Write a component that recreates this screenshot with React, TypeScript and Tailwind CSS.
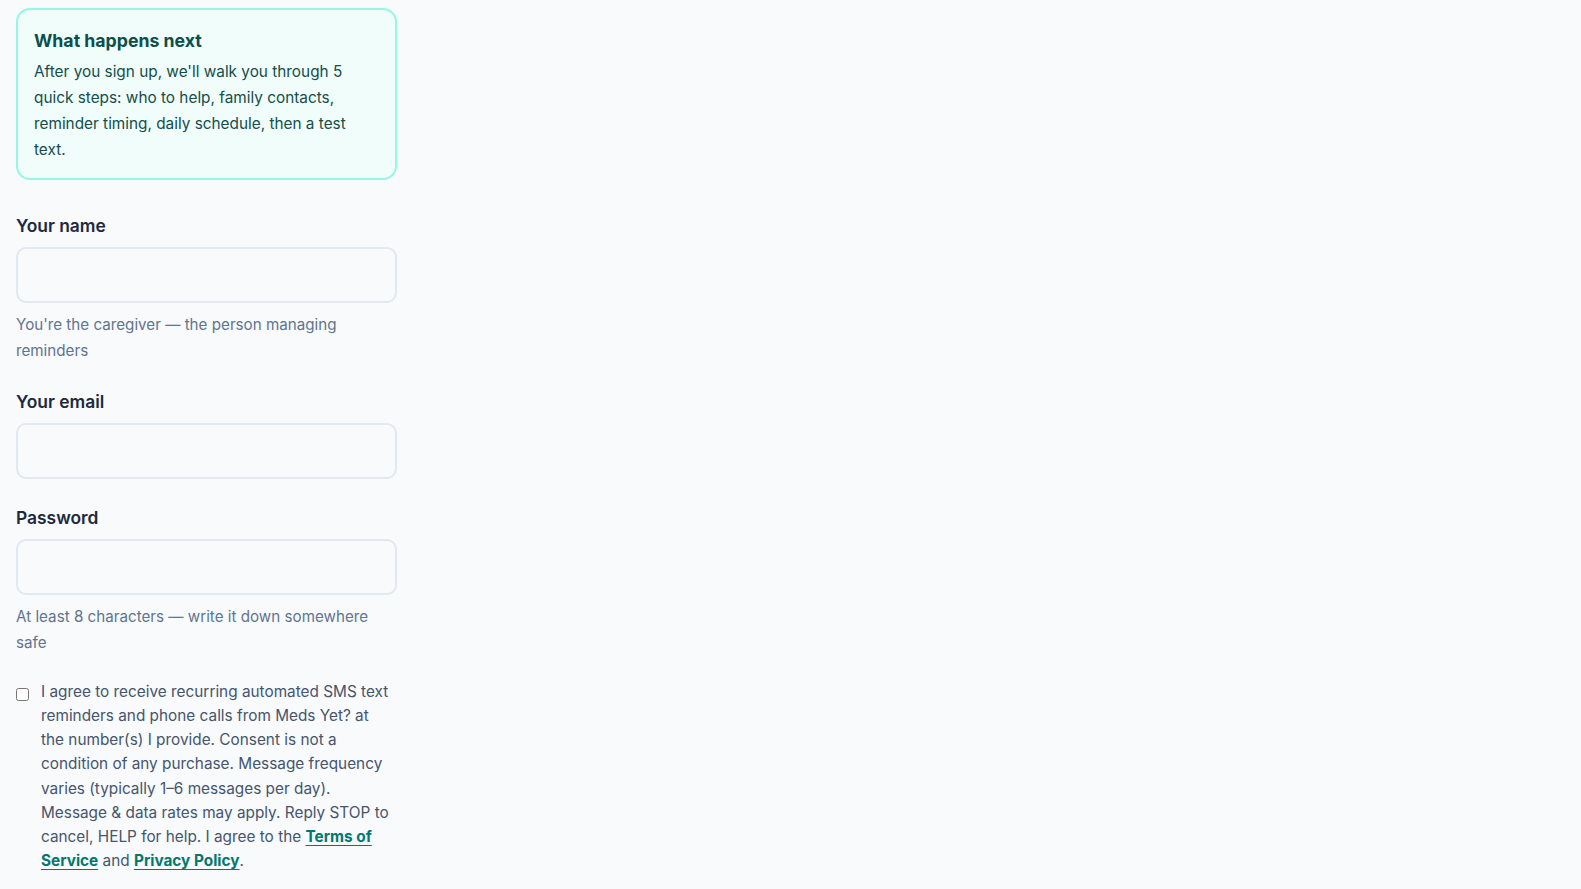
import { useState } from 'react'

const Field = ({
  label,
  type,
  hint,
  className,
  hintClassName = 'mt-2',
}: {
  label: string
  type: string
  hint?: string
  className: string
  hintClassName?: string
}) => {
  return (
    <div className={className}>
      <label className="block text-[17.4px] leading-[28px] font-semibold text-slate-800 mb-[7px]">{label}</label>
      <input
        type={type}
        className="block w-full h-[56px] rounded-[10px] border-2 border-slate-200 bg-slate-50 px-4 text-[16px] text-slate-800 outline-none focus:border-teal-400"
      />
      {hint && <p className={`${hintClassName} text-[15.2px] leading-[26px] text-slate-500`}>{hint}</p>}
    </div>
  )
}

export default function App() {
  const [agreed, setAgreed] = useState(false)

  return (
    <div className="min-h-screen bg-slate-50 font-['Inter',sans-serif]">
      <div className="w-[381px] ml-4 pt-2">
        {/* What happens next */}
        <div className="rounded-[14px] border-2 border-teal-200 bg-[#f0fdfa] px-4 pt-[19px] pb-[15px]">
          <h3 className="text-[17.7px] leading-[24px] font-bold text-teal-900 mb-[6px]">What happens next</h3>
          <p className="text-[15.35px] leading-[26px] text-[#134e4a]">
            After you sign up, we'll walk you through 5 quick steps: who to help, family contacts, reminder timing,
            daily schedule, then a test text.
          </p>
        </div>

        <div className="mt-[32px]">
          <Field
            label="Your name"
            type="text"
            hint="You're the caregiver — the person managing reminders"
            className="mb-[24px]"
            hintClassName="mt-[9px]"
          />
          <Field label="Your email" type="email" className="mb-[25px]" />
          <Field
            label="Password"
            type="password"
            hint="At least 8 characters — write it down somewhere safe"
            className="mb-[26px]"
            hintClassName="mt-[9px]"
          />

          {/* Consent */}
          <label className="flex items-start gap-3 -mt-[2px] pr-1">
            <input
              type="checkbox"
              checked={agreed}
              onChange={(e) => setAgreed(e.target.checked)}
              className="mt-[8px] w-[13px] h-[13px] shrink-0"
            />
            <span className="text-[15.35px] leading-[24.15px] text-slate-600">
              I agree to receive recurring automated SMS text reminders and phone calls from Meds Yet? at the number(s) I
              provide. Consent is not a condition of any purchase. Message frequency varies (typically 1–6 messages per
              day). Message &amp; data rates may apply. Reply STOP to cancel, HELP for help. I agree to the{' '}
              <a href="#" className="font-bold text-teal-700 underline underline-offset-[3px]">
                Terms of Service
              </a>{' '}
              and{' '}
              <a href="#" className="font-bold text-teal-700 underline underline-offset-[3px]">
                Privacy Policy
              </a>
              .
            </span>
          </label>
        </div>
      </div>
    </div>
  )
}
